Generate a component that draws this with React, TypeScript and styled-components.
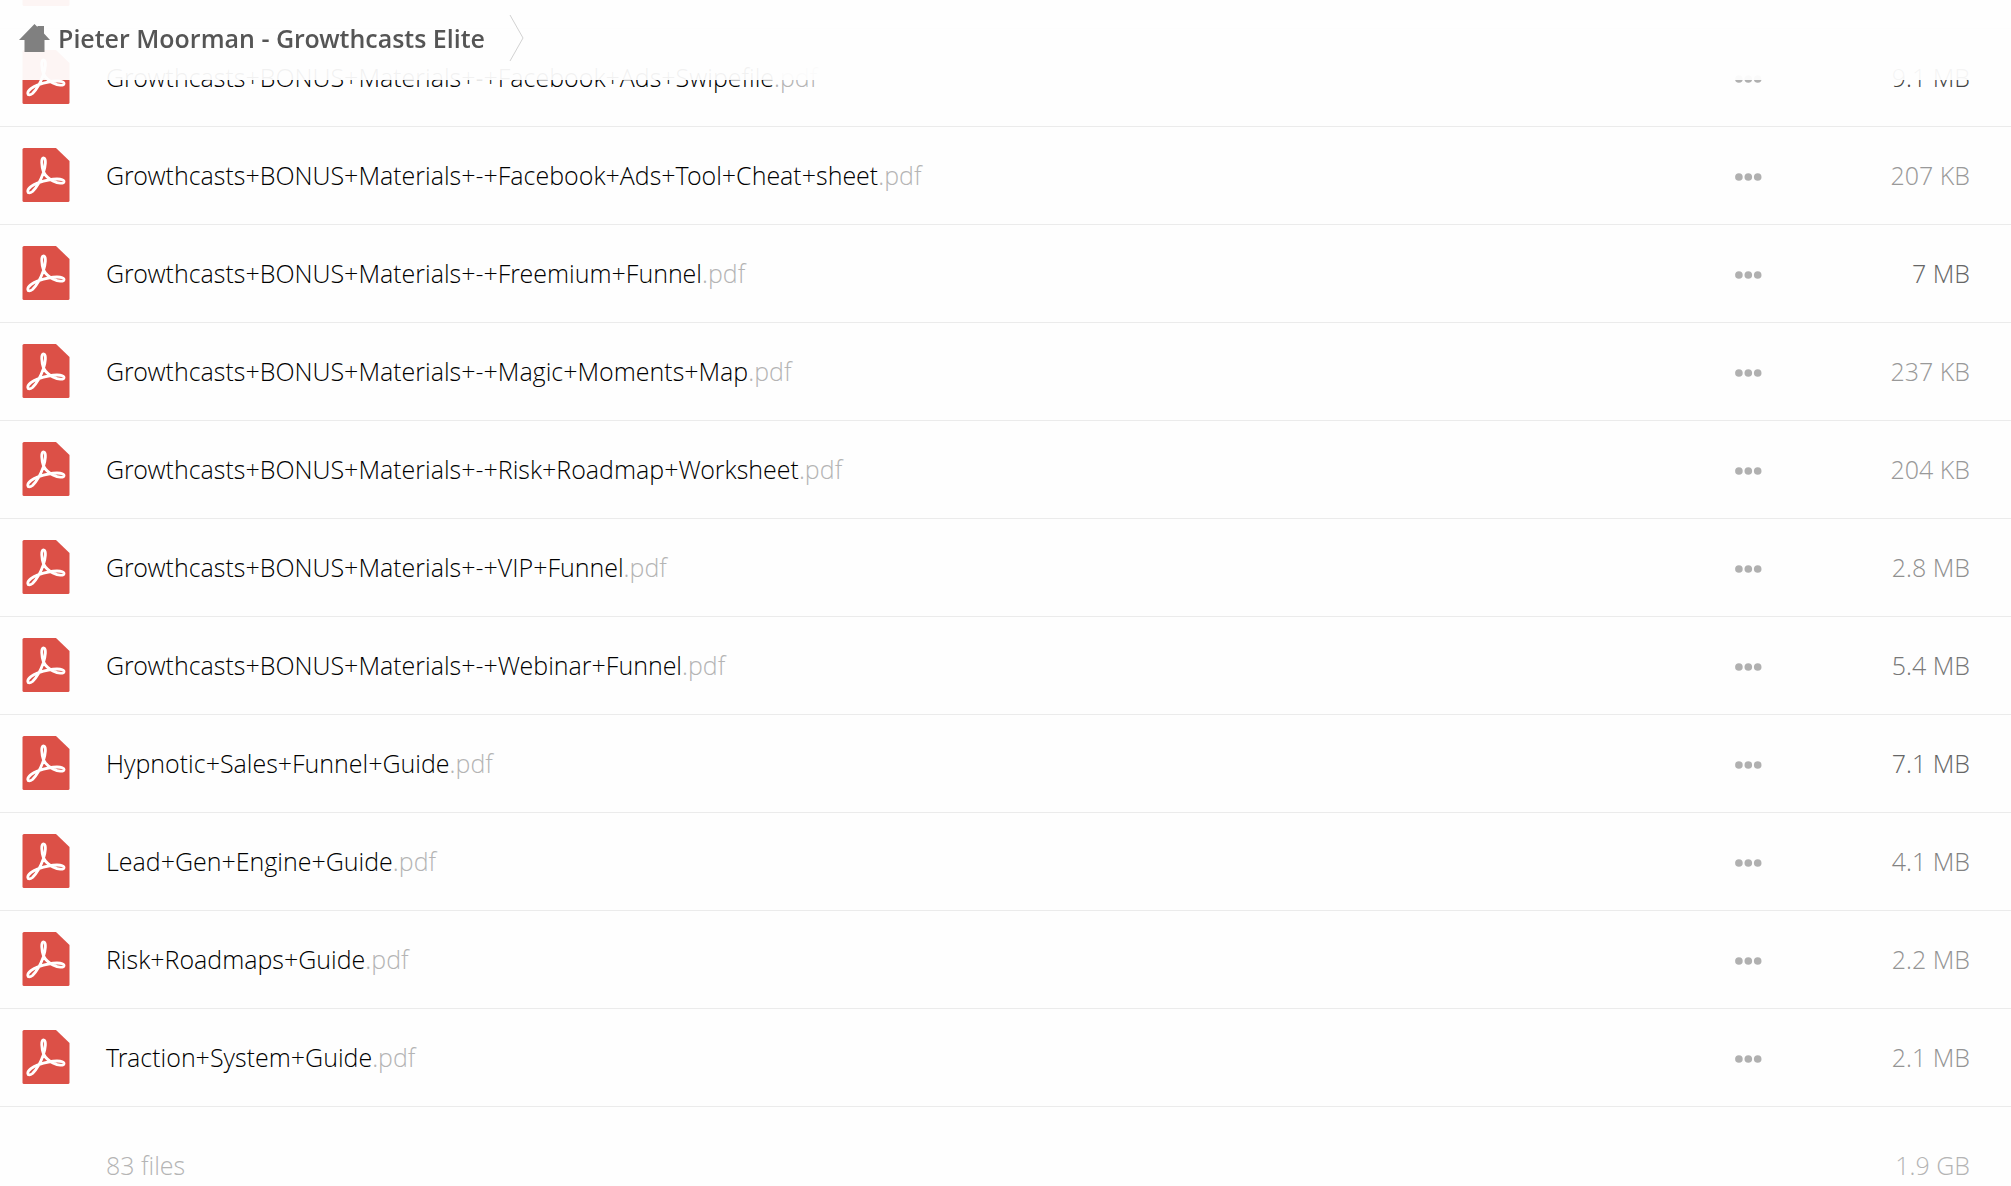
import React from "react";
import styled, { createGlobalStyle } from "styled-components";

const GlobalStyle = createGlobalStyle`
  * { box-sizing: border-box; }
  html, body { margin: 0; background: #fefefe; }
  body { font-family: "Open Sans Light", "Open Sans", sans-serif; font-weight: 300; font-size: 25px; line-height: 36px; color: #000; }
`;

const Page = styled.div`
  height: 100vh;
  overflow: hidden;
`;

const Header = styled.header`
  position: fixed;
  inset: 0 0 auto;
  z-index: 1;
  display: flex;
  align-items: center;
  gap: 24px;
  height: 80px;
  padding: 0 19px 4px;
  background: rgba(254, 254, 254, 0.95);
`;

const Crumb = styled.a`
  display: flex;
  align-items: center;
  gap: 8px;
  color: #555;
  font-family: "Open Sans SemiBold", "Open Sans", sans-serif;
  font-weight: 600;
  text-decoration: none;
`;

const Files = styled.table`
  width: 100%;
  margin-top: -70px;
  border-collapse: collapse;
  table-layout: fixed;
`;

const Row = styled.tr`
  height: 98px;
  border-bottom: 1px solid #ebebeb;
`;

const TotalRow = styled.tr`
  height: 118px;
  color: #b4b4b4;
`;

const IconColumn = styled.col`
  width: 106px;
`;

const MenuColumn = styled.col`
  width: 96px;
`;

const SizeColumn = styled.col`
  width: 180px;
`;

const Cell = styled.td`
  padding: 0;
  white-space: nowrap;
`;

const IconCell = styled(Cell)`
  padding-left: 22px;
  svg { display: block; }
`;

const SizeCell = styled(Cell)<{ $tone?: string }>`
  padding-right: 41px;
  text-align: right;
  color: ${(p) => p.$tone ?? "inherit"};
`;

const FileLink = styled.a`
  color: #000;
  text-decoration: none;
`;

const Extension = styled.span`
  color: #b4b4b4;
`;

const MenuButton = styled.button`
  display: block;
  padding: 10px 0 6px;
  border: 0;
  background: none;
  cursor: pointer;
  svg { display: block; }
`;

const HomeIcon = () => (
  <svg width="31" height="28" viewBox="0 0 31 28" fill="#808080" aria-hidden="true">
    <path d="M15.500 0 18.500 3V2h6.500v7.500l6 6.500h-5.500v12h-20V16H0Z" />
  </svg>
);

const PdfIcon = () => (
  <svg width="48" height="54" viewBox="0 0 48 54" role="img" aria-label="PDF">
    <path d="M2 0H34L47.500 13V52.500Q47.500 54 46 54H2Q.5 54 .5 52.500V1.500Q.5 0 2 0Z" fill="#dc5047" />
    <path
      d="M21.500 24C19.500 18 18.800 9.800 21.600 9.800C24.500 9.800 23.500 19 21.300 25C18.500 33 14 40 10.500 43.500C8 45.500 6 45.300 5.800 43.500C5.500 40.500 11 36.500 16 34.800C22 32.800 29 31 35 31C39.500 31 42.300 32 42 33.700C41.500 36 36 35.500 31.500 33.300C26.500 30.800 23.500 28 21.500 24Z"
      fill="none"
      stroke="#fff"
      strokeWidth="2.800"
      strokeLinejoin="round"
    />
  </svg>
);

const DotsIcon = () => (
  <svg width="27" height="8" viewBox="0 0 27 8" fill="#b0b0b0" aria-hidden="true">
    <circle cx="3.900" cy="4" r="3.800" />
    <circle cx="13.300" cy="4" r="3.800" />
    <circle cx="22.700" cy="4" r="3.800" />
  </svg>
);

const SeparatorIcon = () => (
  <svg width="16" height="46" viewBox="0 0 16 46" fill="none" stroke="#d2d2d2" aria-hidden="true">
    <path d="M1 0 14 23 1 46" />
  </svg>
);

const prefix = "Growthcasts+BONUS+Materials+-+";

const files = [
  { name: prefix + "Facebook+Ads+Swipefile", size: "9.1 MB", tone: "#444" },
  { name: prefix + "Facebook+Ads+Tool+Cheat+sheet", size: "207 KB", tone: "#999" },
  { name: prefix + "Freemium+Funnel", size: "7 MB", tone: "#666" },
  { name: prefix + "Magic+Moments+Map", size: "237 KB", tone: "#999" },
  { name: prefix + "Risk+Roadmap+Worksheet", size: "204 KB", tone: "#999" },
  { name: prefix + "VIP+Funnel", size: "2.8 MB", tone: "#909090" },
  { name: prefix + "Webinar+Funnel", size: "5.4 MB", tone: "#777" },
  { name: "Hypnotic+Sales+Funnel+Guide", size: "7.1 MB", tone: "#666" },
  { name: "Lead+Gen+Engine+Guide", size: "4.1 MB", tone: "#828282" },
  { name: "Risk+Roadmaps+Guide", size: "2.2 MB", tone: "#949494" },
  { name: "Traction+System+Guide", size: "2.1 MB", tone: "#949494" },
];

export default function App() {
  return (
    <Page>
      <GlobalStyle />
      <Header>
        <Crumb href="#">
          <HomeIcon />
          Pieter Moorman - Growthcasts Elite
        </Crumb>
        <SeparatorIcon />
      </Header>
      <Files>
        <colgroup>
          <IconColumn />
          <col />
          <MenuColumn />
          <SizeColumn />
        </colgroup>
        <tbody>
          <Row>
            <IconCell colSpan={4}><PdfIcon /></IconCell>
          </Row>
          {files.map((file) => (
            <Row key={file.name}>
              <IconCell><PdfIcon /></IconCell>
              <Cell>
                <FileLink href="#">{file.name}<Extension>.pdf</Extension></FileLink>
              </Cell>
              <Cell>
                <MenuButton aria-label={"Actions for " + file.name}><DotsIcon /></MenuButton>
              </Cell>
              <SizeCell $tone={file.tone}>{file.size}</SizeCell>
            </Row>
          ))}
        </tbody>
        <tfoot>
          <TotalRow>
            <Cell />
            <Cell>83 files</Cell>
            <Cell />
            <SizeCell>1.9 GB</SizeCell>
          </TotalRow>
        </tfoot>
      </Files>
    </Page>
  );
}
